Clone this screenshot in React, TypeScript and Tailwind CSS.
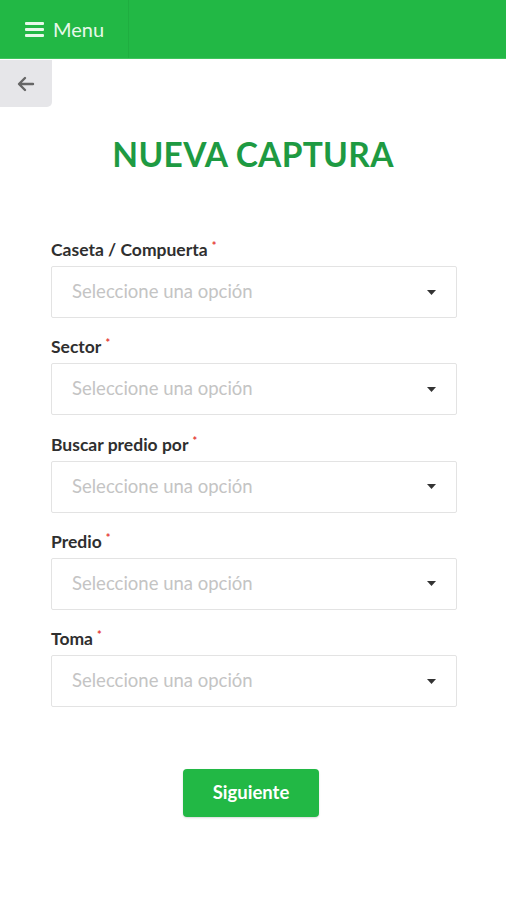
import React from "react";

const fields = ["Caseta / Compuerta", "Sector", "Buscar predio por", "Predio", "Toma"];

export default function App() {
  return (
    <div className="min-h-[900px] bg-white" style={{ fontFamily: "Lato, 'Open Sans', sans-serif" }}>
      <div className="h-[59px] bg-[#22b845] flex border-b border-[#3fc45c]">
        <div className="w-[129px] flex items-center pl-[25px] gap-[9px] border-r border-[#1fae40] text-[#e8f8ea]">
          <svg width="19" height="16" viewBox="0 0 19 16">
            <rect x="0" y="1" width="19" height="3" rx="1" fill="#e8f8ea" />
            <rect x="0" y="7" width="19" height="3" rx="1" fill="#e8f8ea" />
            <rect x="0" y="13" width="19" height="3" rx="1" fill="#e8f8ea" />
          </svg>
          <span className="text-[20px] leading-none">Menu</span>
        </div>
      </div>
      <div className="h-[48px]">
        <div className="w-[52px] h-[47px] mt-[1px] bg-[#e6e6e9] rounded-br-[5px] flex items-center justify-center">
          <svg width="18" height="16" viewBox="0 0 18 16" fill="none" stroke="#666" strokeWidth="2.4" strokeLinecap="round" strokeLinejoin="round">
            <path d="M16 8H3M8 2L2 8l6 6" />
          </svg>
        </div>
      </div>
      <h1 className="text-center text-[33.5px] font-bold text-[#1e9a42] mt-[26px] leading-[40px] tracking-[0.3px]">NUEVA CAPTURA</h1>
      <div className="ml-[51px] w-[406px] mt-[66px] flex flex-col gap-[19.25px]">
        {fields.map((f) => (
          <div key={f} className="flex flex-col">
            <label className="text-[17.5px] font-bold text-[#2f2f2f] leading-[20px] h-[20px]">
              {f}
              <span className="text-[#e53935] text-[11px] align-top relative -top-[4px] ml-[4px]">*</span>
            </label>
            <div className="mt-[6px] h-[52px] border border-[#e3e3e3] rounded-[2px] flex items-center justify-between pl-[20px] pr-[20px]">
              <span className="text-[18.5px] text-[#c4c4c4]">Seleccione una opción</span>
              <svg width="9" height="5" viewBox="0 0 9 5">
                <path d="M0 0h9L4.5 5z" fill="#333" />
              </svg>
            </div>
          </div>
        ))}
      </div>
      <div className="flex justify-center mt-[62px] pr-[4px]">
        <button className="w-[136px] h-[48px] bg-[#22b845] rounded-[4px] text-white font-bold text-[18.5px] shadow-[0_1px_2px_rgba(0,0,0,0.15)]">
          Siguiente
        </button>
      </div>
    </div>
  );
}
